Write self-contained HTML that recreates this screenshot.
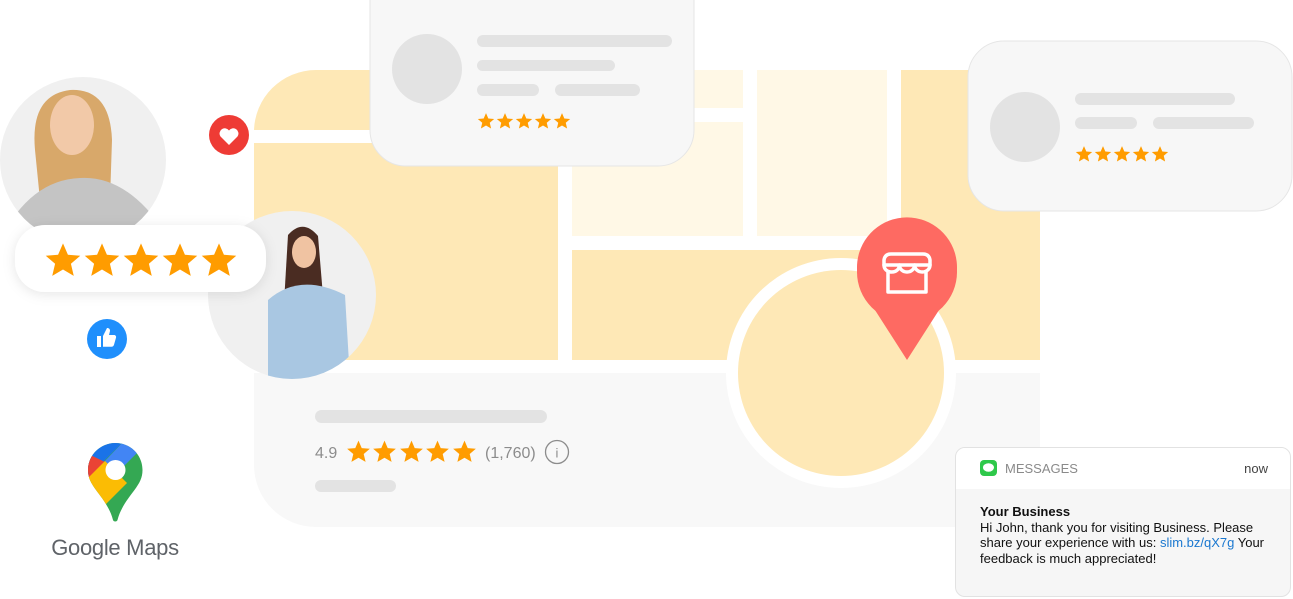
<!DOCTYPE html>
<html><head><meta charset="utf-8"><style>
html,body{margin:0;padding:0;background:#fff;width:1293px;height:599px;overflow:hidden;font-family:"Liberation Sans",Arial,sans-serif}
.abs{position:absolute}
.msg{left:955px;top:447px;width:336px;height:150px;border:1px solid #e2e2e2;border-radius:10px;background:#f6f6f6;overflow:hidden;box-sizing:border-box}
.msg .hd{height:41px;background:#fff;position:relative;font-size:13px;color:#8a8a8a}
.msg .bd{padding:15px 20px 0 24px;font-size:13px;line-height:15.5px;color:#111}
</style></head><body>
<svg class="abs" style="left:0;top:0" width="1293" height="599" viewBox="0 0 1293 599">
<defs>
<clipPath id="mapc"><rect x="254" y="70" width="786" height="457" rx="62"/></clipPath>
<clipPath id="c1"><circle cx="83" cy="160" r="83"/></clipPath>
<clipPath id="c2"><circle cx="292" cy="295" r="84"/></clipPath>
<filter id="sh" x="-20%" y="-40%" width="140%" height="180%"><feDropShadow dx="0" dy="2" stdDeviation="6" flood-color="#000" flood-opacity="0.10"/></filter>
<symbol id="st" viewBox="0 0 24 24"><path d="M12 1.5l3.1 7.2 7.8.6-5.9 5.1 1.8 7.6L12 18l-6.8 4 1.8-7.6-5.9-5.1 7.8-.6z" fill="#ff9c00"/></symbol>
</defs>
<g clip-path="url(#mapc)">
<rect x="254" y="70" width="786" height="457" fill="#fff"/>
<rect x="254" y="70" width="304" height="60" fill="#fee8b6"/>
<rect x="254" y="143" width="304" height="217" fill="#fee8b6"/>
<rect x="572" y="70" width="171" height="38" fill="#fff8e6"/>
<rect x="572" y="122" width="171" height="114" fill="#fff8e6"/>
<rect x="757" y="70" width="130" height="166" fill="#fff8e6"/>
<rect x="901" y="70" width="139" height="290" fill="#fee8b6"/>
<rect x="572" y="250" width="468" height="110" fill="#fee8b6"/>
<rect x="254" y="373" width="786" height="160" fill="#f8f8f8"/>
</g>
<circle cx="841" cy="373" r="115" fill="#fff"/>
<circle cx="841" cy="373" r="103" fill="#fee8b6"/>
<path d="M907 360 L866 296 A50 50 0 1 1 948 296 Z" fill="#fe6a62"/>
<circle cx="907" cy="272" r="50" fill="#fe6a62"/>
<g fill="none" stroke="#fff" stroke-width="3.5" stroke-linejoin="round" stroke-linecap="round">
<path d="M891 254h32q6 0 7 6v5h-46v-5q1-6 7-6z"/>
<path d="M884 265c0 4 3 7 7.7 7s7.7-3 7.7-7c0 4 3.4 7 7.6 7s7.6-3 7.6-7c0 4 3.4 7 7.7 7s7.7-3 7.7-7"/>
<path d="M888 272v20h38v-20"/>
</g>
<rect x="315" y="410" width="232" height="13" rx="6.5" fill="#e3e3e3"/>
<rect x="315" y="480" width="81" height="12" rx="6" fill="#e3e3e3"/>
<text x="315" y="458" font-size="16" fill="#8c8c8c">4.9</text>
<use href="#st" x="346" y="439" width="25" height="25"/><use href="#st" x="372" y="439" width="25" height="25"/><use href="#st" x="399" y="439" width="25" height="25"/><use href="#st" x="425" y="439" width="25" height="25"/><use href="#st" x="452" y="439" width="25" height="25"/>
<text x="485" y="458" font-size="16" fill="#8c8c8c">(1,760)</text>
<circle cx="557" cy="452" r="11.5" fill="none" stroke="#8c8c8c" stroke-width="1.3"/>
<text x="557" y="457.5" font-size="13" fill="#8c8c8c" text-anchor="middle">i</text>
<rect x="370" y="-40" width="324" height="206" rx="36" fill="#f7f7f7" stroke="#e6e6e6"/>
<circle cx="427" cy="69" r="35" fill="#e3e3e3"/>
<rect x="477" y="35" width="195" height="12" rx="6" fill="#e3e3e3"/>
<rect x="477" y="60" width="138" height="11" rx="5.5" fill="#e3e3e3"/>
<rect x="477" y="84" width="62" height="12" rx="6" fill="#e3e3e3"/>
<rect x="555" y="84" width="85" height="12" rx="6" fill="#e3e3e3"/>
<use href="#st" x="477" y="112" width="18" height="18"/><use href="#st" x="496" y="112" width="18" height="18"/><use href="#st" x="515" y="112" width="18" height="18"/><use href="#st" x="534" y="112" width="18" height="18"/><use href="#st" x="553" y="112" width="18" height="18"/>
<rect x="968" y="41" width="324" height="170" rx="36" fill="#f7f7f7" stroke="#e6e6e6"/>
<circle cx="1025" cy="127" r="35" fill="#e3e3e3"/>
<rect x="1075" y="93" width="160" height="12" rx="6" fill="#e3e3e3"/>
<rect x="1075" y="117" width="62" height="12" rx="6" fill="#e3e3e3"/>
<rect x="1153" y="117" width="101" height="12" rx="6" fill="#e3e3e3"/>
<use href="#st" x="1075" y="145" width="18" height="18"/><use href="#st" x="1094" y="145" width="18" height="18"/><use href="#st" x="1113" y="145" width="18" height="18"/><use href="#st" x="1132" y="145" width="18" height="18"/><use href="#st" x="1151" y="145" width="18" height="18"/>
<circle cx="83" cy="160" r="83" fill="#f0f0f0"/>
<g clip-path="url(#c1)">
<path d="M35 150 Q30 95 70 90 Q110 88 112 140 L110 200 L40 200 Z" fill="#d8a86a"/>
<ellipse cx="72" cy="125" rx="22" ry="30" fill="#f2c9a8"/>
<path d="M0 240 Q30 180 80 178 Q130 175 170 240 Z" fill="#c4c4c4"/>
</g>
<circle cx="292" cy="295" r="84" fill="#f0f0f0"/>
<g clip-path="url(#c2)">
<path d="M288 235 Q303 218 318 236 L325 320 L283 320 Z" fill="#4a2c22"/>
<ellipse cx="304" cy="252" rx="12" ry="16" fill="#f0c3a2"/>
<path d="M268 380 L268 300 Q300 272 345 295 L350 380 Z" fill="#a9c7e2"/>
</g>
<circle cx="229" cy="135" r="20" fill="#ee3b35"/>
<path d="M229 145 l-8.5-8.5a5 5 0 0 1 8.5-6 5 5 0 0 1 8.5 6z" fill="#fff"/>
<circle cx="107" cy="339" r="20" fill="#1f8ffc"/>
<path d="M97 336h4v11h-4z M103 336l4-8c2 0 3 1 3 3l-1 4h5c1.5 0 2.5 1.3 2 2.8l-2 7c-.4 1.3-1.3 2-2.5 2H103z" fill="#fff"/>
<rect x="15" y="225" width="251" height="67" rx="30" fill="#fff" filter="url(#sh)"/>
<use href="#st" x="44" y="241" width="38" height="38"/><use href="#st" x="83" y="241" width="38" height="38"/><use href="#st" x="122" y="241" width="38" height="38"/><use href="#st" x="161" y="241" width="38" height="38"/><use href="#st" x="200" y="241" width="38" height="38"/>
<g>
<clipPath id="gp"><path d="M115.5 443c-15 0-27.5 12-27.5 27 0 8 3 13 8 20 6 8 14 18 17 30 .5 2 4 2 4.5 0 3-12 11-22 17-30 5-7 8-12 8-20 0-15-12-27-27-27z"/></clipPath>
<g clip-path="url(#gp)">
<rect x="80" y="440" width="80" height="90" fill="#34a853"/>
<path d="M80 440h45l-37 37z" fill="#1a73e8"/>
<path d="M125 440h25l-35 35-12-12z" fill="#4285f4"/>
<path d="M80 450l25 12-17 18-8 0z" fill="#ea4335"/>
<path d="M88 478l17-17 22 22-30 30-15-20z" fill="#fbbc04"/>
</g>
<circle cx="115.5" cy="470" r="10" fill="#fff"/>
</g>
<text x="115" y="555" font-size="22" fill="#5f6368" text-anchor="middle" letter-spacing="-0.3">Google Maps</text>
</svg>
<div class="abs msg">
<div class="hd">
<svg class="abs" style="left:24px;top:12px" width="17" height="16" viewBox="0 0 17 16"><rect width="17" height="16" rx="4" fill="#2ec84a"/><ellipse cx="8.5" cy="7.5" rx="5.5" ry="4.3" fill="#fff"/></svg>
<span class="abs" style="left:49px;top:13px">MESSAGES</span>
<span class="abs" style="right:22px;top:13px;color:#444">now</span>
</div>
<div class="bd"><b>Your Business</b><br>Hi John, thank you for visiting Business. Please share your experience with us: <span style="color:#1b78d0">slim.bz/qX7g</span> Your feedback is much appreciated!</div>
</div>
</body></html>
